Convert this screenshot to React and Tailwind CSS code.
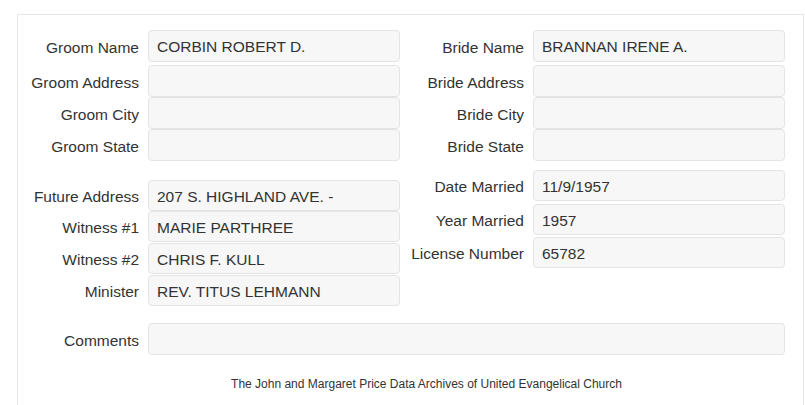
import React from "react";

function Field({ label, value = "", labelW, inputW, h = "h-[32px]", mt = "" }) {
  return (
    <div className={`flex items-center ${mt}`}>
      <div className={`${labelW} text-right shrink-0 pt-[3px] text-[15.5px] text-[#333]`}>{label}</div>
      <div
        className={`${inputW} ${h} ml-[9px] shrink-0 rounded-[4px] border border-[#e4e4e4] bg-[#f7f7f7] pl-[8px] pt-[2px] flex items-center text-[15.5px] text-[#333]`}
      >
        {value}
      </div>
    </div>
  );
}

export default function App() {
  const L = "w-[121px]";
  const R = "w-[124px]";
  const IW = "w-[252px]";
  return (
    <div
      className="w-[805px] h-[405px] overflow-hidden bg-white pt-[14px] pl-[17px]"
      style={{ fontFamily: '"Liberation Sans", Arial, sans-serif' }}
    >
      <div className="w-[787px] h-[400px] border border-b-0 border-[#e5e5e5] pt-[15px]">
        <div className="flex">
          <div className="flex flex-col w-[382px]">
            <Field label="Groom Name" value="CORBIN ROBERT D." labelW={L} inputW={IW} />
            <Field label="Groom Address" labelW={L} inputW={IW} mt="mt-[3px]" />
            <Field label="Groom City" labelW={L} inputW={IW} />
            <Field label="Groom State" labelW={L} inputW={IW} />
            <Field label="Future Address" value="207 S. HIGHLAND AVE. -" labelW={L} inputW={IW} h="h-[31px]" mt="mt-[19px]" />
            <Field label="Witness #1" value="MARIE PARTHREE" labelW={L} inputW={IW} h="h-[31px]" />
            <Field label="Witness #2" value="CHRIS F. KULL" labelW={L} inputW={IW} h="h-[31px]" mt="mt-[1px]" />
            <Field label="Minister" value="REV. TITUS LEHMANN" labelW={L} inputW={IW} h="h-[31px]" mt="mt-[1px]" />
          </div>
          <div className="flex flex-col">
            <Field label="Bride Name" value="BRANNAN IRENE A." labelW={R} inputW={IW} />
            <Field label="Bride Address" labelW={R} inputW={IW} mt="mt-[3px]" />
            <Field label="Bride City" labelW={R} inputW={IW} />
            <Field label="Bride State" labelW={R} inputW={IW} />
            <Field label="Date Married" value="11/9/1957" labelW={R} inputW={IW} h="h-[31px]" mt="mt-[9px]" />
            <Field label="Year Married" value="1957" labelW={R} inputW={IW} h="h-[31px]" mt="mt-[3px]" />
            <Field label="License Number" value="65782" labelW={R} inputW={IW} h="h-[31px]" mt="mt-[2px]" />
          </div>
        </div>
        <Field label="Comments" labelW={L} inputW="w-[637px]" mt="mt-[17px]" />
        <div className="mt-[20px] pl-[32px] text-center text-[12px] text-[#333]">
          The John and Margaret Price Data Archives of United Evangelical Church
        </div>
      </div>
    </div>
  );
}
